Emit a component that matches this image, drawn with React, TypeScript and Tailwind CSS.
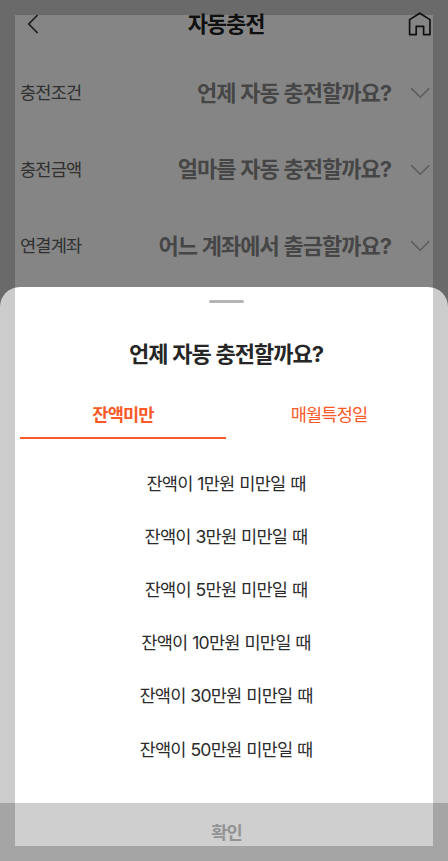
import { useState } from "react";

const rows = [
    { label: "충전조건", value: "언제 자동 충전할까요?" },
    { label: "충전금액", value: "얼마를 자동 충전할까요?" },
    { label: "연결계좌", value: "어느 계좌에서 출금할까요?" },
];

const tabs = ["잔액미만", "매월특정일"];

const amounts = [1, 3, 5, 10, 30, 50];

const BackIcon = () => (
    <svg width="12" height="20" viewBox="0 0 12 20" fill="none" stroke="#1c1c1c" strokeWidth="1.7">
        <path d="M10.6 1 L1.8 10 L10.6 19" />
    </svg>
);

const HomeIcon = () => (
    <svg width="24" height="24" viewBox="0 0 24 24" fill="none" stroke="#111111" strokeWidth="1.7" strokeLinejoin="round">
        <path d="M1.6 7.6 L11.8 1.2 L22 7.6 V22.6 H15.6 V14.4 H8.2 V22.6 H1.6 Z" />
    </svg>
);

const DownIcon = () => (
    <svg width="20" height="12" viewBox="0 0 20 12" fill="none" stroke="#5c5c5c" strokeWidth="1.6">
        <path d="M1.2 1.2 L10.2 10.2 L19.2 1.2" />
    </svg>
);

const App = () => {
    const [tab, setTab] = useState(0);

    return (
        <div className="relative flex h-[861px] w-[448px] flex-col overflow-hidden bg-[#858585] font-['Inter','Noto_Sans_CJK_KR',sans-serif]">
            <header className="flex h-12 shrink-0 items-center justify-between pl-[27px] pr-4">
                <BackIcon />
                <h1 className="pb-px pl-[5px] text-[22px] font-bold leading-6 tracking-[-1.1px] text-[#101010]">자동충전</h1>
                <HomeIcon />
            </header>

            <div className="flex h-[239px] shrink-0 flex-col pt-[7px]">
                {rows.map((row) => (
                    <div key={row.label} className="flex h-[76.5px] items-center pl-5 pr-[18px]">
                        <span className="text-[17.6px] leading-6 tracking-[-0.85px] text-[#303030]">{row.label}</span>
                        <span className="ml-auto mr-[19px] pb-px text-[22px] font-bold leading-8 tracking-[-1px] text-[#464646] [word-spacing:0.6px]">{row.value}</span>
                        <DownIcon />
                    </div>
                ))}
            </div>

            <section className="flex flex-1 flex-col rounded-t-[20px] bg-white">
                <div className="ml-[209px] mt-[13px] h-[3px] w-[35px] rounded-full bg-[#b5b5b5]" />
                <h2 className="mt-[35px] pl-1 text-center text-[22px] font-bold leading-8 tracking-[-1px] text-[#262626] [word-spacing:0.6px]">언제 자동 충전할까요?</h2>

                <div className="ml-5 mr-4 mt-[19px] flex h-[50px]">
                    {tabs.map((name, i) => (
                        <button
                            key={name}
                            onClick={() => setTab(i)}
                            className={
                                tab === i
                                    ? "w-1/2 border-b-2 border-[#fa5a28] pt-[3px] text-[17.6px] font-bold leading-6 tracking-[-0.85px] text-[#fa5a28]"
                                    : "w-1/2 border-b-2 border-transparent pt-[3px] text-[17.6px] leading-6 tracking-[-0.85px] text-[#fa5a28]"
                            }
                        >
                            {name}
                        </button>
                    ))}
                </div>

                <ul className="flex flex-col pl-1 pt-[18px]">
                    {amounts.map((amount) => (
                        <li key={amount} className="flex h-[53.2px] items-center justify-center text-[17.6px] leading-6 tracking-[-0.8px] text-[#2b2b2b] [word-spacing:0.6px]">
                            <span>잔액이 {amount}만원 미만일 때</span>
                        </li>
                    ))}
                </ul>

                <button className="mt-auto h-[58px] bg-[#cfcfcf] pl-[5px] pt-[2px] text-[17.6px] font-bold leading-6 tracking-[-0.85px] text-[#939393]">확인</button>
            </section>

            {/* translucent frame over the whole screen */}
            <div className="pointer-events-none absolute inset-0 border-[15px] border-black/20" />
        </div>
    );
};

export default App;
